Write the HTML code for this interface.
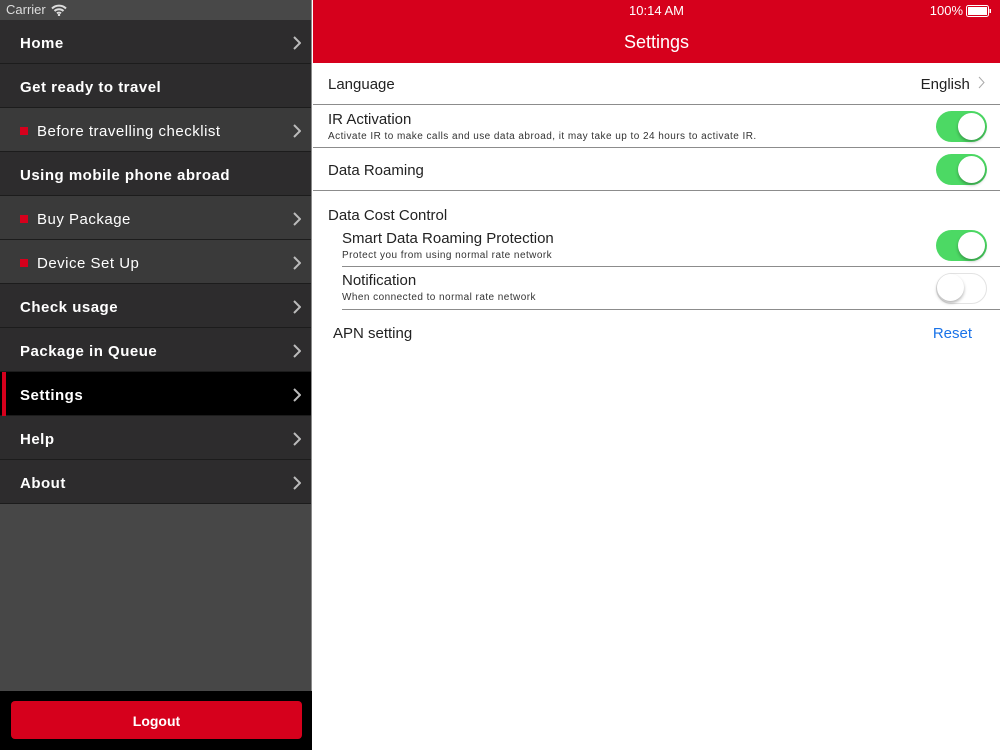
<!DOCTYPE html>
<html><head><meta charset="utf-8">
<style>
*{margin:0;padding:0;box-sizing:border-box}
body{width:1000px;height:750px;overflow:hidden;font-family:"Liberation Sans",sans-serif;background:#fff;position:relative}
#side{position:absolute;left:0;top:0;width:312px;height:750px;background:#474747;border-right:1px solid #8a8a8a}
#sb{height:20px;background:#484848;color:#ddd;font-size:13px;line-height:20px;padding-left:6px;display:flex;align-items:center;gap:5px}
.row{height:44px;border-bottom:1px solid #1c1c1c;color:#fff;font-size:15px;display:flex;align-items:center;padding-left:20px;padding-top:3px;position:relative;letter-spacing:0.5px}
.b{font-weight:bold;background:#2d2c2d}
.s{background:#3a3a3a;padding-left:37px}
.s::before{content:"";position:absolute;left:20px;top:19px;width:8px;height:8px;background:#d6001c}
.sel{background:#000;font-weight:bold}
.sel::after{content:"";position:absolute;left:2px;top:0;width:4px;height:44px;background:#d6001c}
.ch{position:absolute;right:10px;top:16px}
#foot{position:absolute;left:0;bottom:0;width:312px;height:59px;background:#000}
#logout{position:absolute;left:11px;top:10px;width:291px;height:38px;background:#d6001c;border-radius:4px;color:#fff;font-weight:bold;font-size:14px;text-align:center;line-height:40px}
#main{position:absolute;left:313px;top:0;width:687px;height:750px}
#hdr{height:63px;background:#d6001c;color:#fff;position:relative}
#time{position:absolute;top:3px;width:100%;text-align:center;font-size:13px}
#bat{position:absolute;right:8px;top:3px;font-size:13px;display:flex;align-items:center;gap:3px}
#title{position:absolute;top:32px;width:100%;text-align:center;font-size:18px}
.it{position:absolute;left:15px;right:0;border-bottom:1.5px solid #8c8c8c;color:#222;font-size:15px}
.sub{font-size:10px;color:#333;margin-top:3px;letter-spacing:0.45px}
.tg{position:absolute;right:13px;width:51px;height:31px;border-radius:16px;background:#4cd964}
.tg::after{content:"";position:absolute;right:2px;top:2px;width:27px;height:27px;border-radius:50%;background:#fff;box-shadow:0 2px 3px rgba(0,0,0,.3)}
.off{background:#fff;border:1.5px solid #e3e3e3}
.off::after{left:0;top:0;right:auto}
</style></head><body>
<div id="side">
<div id="sb">Carrier <svg width="16" height="12" viewBox="0 0 16 12"><path d="M1 4.5a10 10 0 0 1 14 0M3.5 7a6.5 6.5 0 0 1 9 0M6 9.4a3 3 0 0 1 4 0" stroke="#ddd" stroke-width="2" fill="none"/><circle cx="8" cy="11" r="1.2" fill="#ddd"/></svg></div>
<div class="row b">Home<svg class="ch" width="9" height="14"><path d="M2 1l6 6-6 6" stroke="#bbb" stroke-width="2" fill="none"/></svg></div>
<div class="row b">Get ready to travel</div>
<div class="row s">Before travelling checklist<svg class="ch" width="9" height="14"><path d="M2 1l6 6-6 6" stroke="#bbb" stroke-width="2" fill="none"/></svg></div>
<div class="row b">Using mobile phone abroad</div>
<div class="row s">Buy Package<svg class="ch" width="9" height="14"><path d="M2 1l6 6-6 6" stroke="#bbb" stroke-width="2" fill="none"/></svg></div>
<div class="row s">Device Set Up<svg class="ch" width="9" height="14"><path d="M2 1l6 6-6 6" stroke="#bbb" stroke-width="2" fill="none"/></svg></div>
<div class="row b">Check usage<svg class="ch" width="9" height="14"><path d="M2 1l6 6-6 6" stroke="#bbb" stroke-width="2" fill="none"/></svg></div>
<div class="row b">Package in Queue<svg class="ch" width="9" height="14"><path d="M2 1l6 6-6 6" stroke="#bbb" stroke-width="2" fill="none"/></svg></div>
<div class="row sel">Settings<svg class="ch" width="9" height="14"><path d="M2 1l6 6-6 6" stroke="#bbb" stroke-width="2" fill="none"/></svg></div>
<div class="row b">Help<svg class="ch" width="9" height="14"><path d="M2 1l6 6-6 6" stroke="#bbb" stroke-width="2" fill="none"/></svg></div>
<div class="row b">About<svg class="ch" width="9" height="14"><path d="M2 1l6 6-6 6" stroke="#bbb" stroke-width="2" fill="none"/></svg></div>
<div id="foot"><div id="logout">Logout</div></div>
</div>
<div id="main">
<div id="hdr"><div id="time">10:14 AM</div><div id="bat">100% <svg width="26" height="12"><rect x="0.5" y="0.5" width="22" height="11" rx="2" fill="none" stroke="#fff"/><rect x="2" y="2" width="19" height="8" fill="#fff"/><rect x="23.5" y="4" width="1.5" height="4" fill="#fff"/></svg></div><div id="title">Settings</div></div>
<div class="it" style="top:63px;height:42px;left:0;padding-left:15px;line-height:44px">Language<span style="position:absolute;right:14px">English <svg width="8" height="13" style="margin-left:4px"><path d="M1 1l5 5.5-5 5.5" stroke="#aaa" stroke-width="1" fill="none"/></svg></span></div>
<div class="it" style="top:105px;height:43px;left:0;padding:6px 15px">IR Activation<div class="sub">Activate IR to make calls and use data abroad, it may take up to 24 hours to activate IR.</div><div class="tg" style="top:6px"></div></div>
<div class="it" style="top:148px;height:43px;left:0;padding-left:15px;line-height:46px">Data Roaming<div class="tg" style="top:6px"></div></div>
<div style="position:absolute;top:207px;left:15px;font-size:15px;color:#222">Data Cost Control</div>
<div class="it" style="top:228px;height:39px;left:29px;padding-top:2px">Smart Data Roaming Protection<div class="sub">Protect you from using normal rate network</div><div class="tg" style="top:2px"></div></div>
<div class="it" style="top:267px;height:43px;left:29px;padding-top:5px">Notification<div class="sub">When connected to normal rate network</div><div class="tg off" style="top:6px"></div></div>
<div style="position:absolute;top:325px;left:20px;font-size:15px;color:#222">APN setting</div>
<div style="position:absolute;top:325px;right:28px;font-size:15px;color:#1a73e8">Reset</div>
</div>
</body></html>
